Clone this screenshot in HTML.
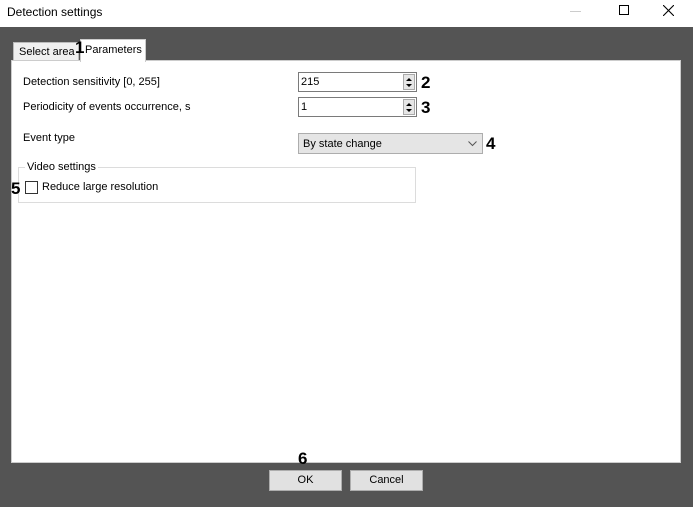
<!DOCTYPE html>
<html><head><style>
*{margin:0;padding:0;box-sizing:border-box}
body{width:693px;height:507px;background:#545454;font-family:"Liberation Sans",sans-serif;font-size:11px;color:#000;position:relative;overflow:hidden}
.a{position:absolute;white-space:nowrap}
.num{position:absolute;font-weight:bold;font-size:17px}
.spin{position:absolute;left:298px;width:119px;height:20px;border:1px solid #7a7a7a;background:#fff;padding:3px 2px;font-size:11px}
.sb{position:absolute;right:1px;top:1px;width:12px;height:16px;background:#e6e6e6;border:1px solid #aaa}
.btn{position:absolute;top:470px;height:21px;width:73px;background:#e1e1e1;border:1px solid #adadad;text-align:center;line-height:19px;font-size:11px}
</style></head><body>
<div class="a" style="left:0;top:0;width:693px;height:27px;background:#fff"></div>
<div class="a" style="left:7px;top:5px;font-size:12px">Detection settings</div>
<div class="a" style="left:570px;top:11px;width:11px;height:1px;background:#ccc"></div>
<div class="a" style="left:619px;top:5px;width:10px;height:10px;border:1px solid #000"></div>
<svg class="a" style="left:663px;top:5px" width="11" height="11"><path d="M0 0L11 11M11 0L0 11" stroke="#000" stroke-width="1.1"/></svg>
<div class="a" style="left:13px;top:42px;width:66px;height:19px;background:#f0f0f0;border:1px solid #bbb;border-bottom:none;padding:3px 0 0 5px;font-size:11px">Select area</div>
<div class="a" style="left:11px;top:60px;width:670px;height:403px;background:#fff;border:1px solid #ccc"></div>
<div class="a" style="left:80px;top:39px;width:66px;height:23px;background:#fff;border:1px solid #ccc;border-bottom:none;padding:4px 4px">Parameters</div>
<div class="num" style="left:75px;top:38px">1</div>
<div class="a" style="left:23px;top:76px">Detection sensitivity [0, 255]</div>
<div class="a" style="left:23px;top:101px">Periodicity of events occurrence, s</div>
<div class="a" style="left:23px;top:132px">Event type</div>
<div class="spin" style="top:72px">215<div class="sb"><svg width="10" height="14"><path d="M2 6L5 3L8 6ZM2 9L5 12L8 9Z" fill="#000"/></svg></div></div>
<div class="spin" style="top:97px">1<div class="sb"><svg width="10" height="14"><path d="M2 6L5 3L8 6ZM2 9L5 12L8 9Z" fill="#000"/></svg></div></div>
<div class="num" style="left:421px;top:73px">2</div>
<div class="num" style="left:421px;top:98px">3</div>
<div class="a" style="left:298px;top:133px;width:185px;height:21px;background:#e5e5e5;border:1px solid #adadad;padding:4px 4px">By state change
<svg class="a" style="right:5px;top:7px" width="9" height="6"><path d="M0.5 0.5L4.5 4.5L8.5 0.5" stroke="#555" fill="none"/></svg></div>
<div class="num" style="left:486px;top:134px">4</div>
<div class="a" style="left:18px;top:167px;width:398px;height:36px;border:1px solid #dcdcdc"></div>
<div class="a" style="left:25px;top:161px;background:#fff;padding:0 2px">Video settings</div>
<div class="a" style="left:25px;top:181px;width:13px;height:13px;border:1px solid #333;background:#fff"></div>
<div class="a" style="left:42px;top:181px">Reduce large resolution</div>
<div class="num" style="left:11px;top:179px">5</div>
<div class="num" style="left:298px;top:449px">6</div>
<div class="btn" style="left:269px">OK</div>
<div class="btn" style="left:350px">Cancel</div>
</body></html>
